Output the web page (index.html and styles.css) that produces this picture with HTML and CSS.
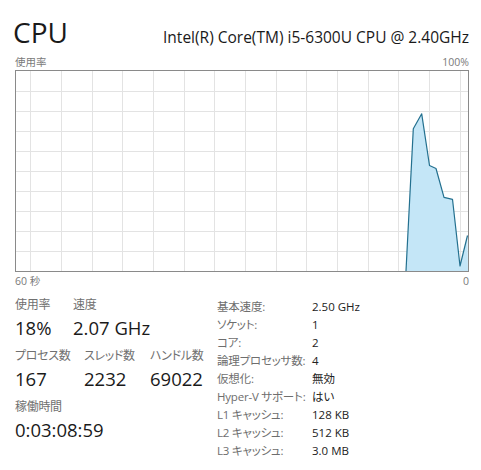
FILE: index.html
```html
<!DOCTYPE html>
<html lang="ja">
<head>
<meta charset="utf-8">
<title>CPU</title>
<link rel="stylesheet" href="styles.css">
</head>
<body>
<div class="page">
  <div class="header">
    <div class="title">CPU</div>
    <div class="model">Intel(R) Core(TM) i5-6300U CPU @ 2.40GHz</div>
  </div>
  <div class="axis axis-top">
    <span class="jp">使用率</span>
    <span>100%</span>
  </div>
  <svg class="graph" width="454" height="202" viewBox="0 0 454 202">
    <g class="grid" stroke="#e3e3e3" stroke-width="1" shape-rendering="crispEdges">
      <line x1="0" y1="21.5" x2="454" y2="21.5"/>
      <line x1="0" y1="41.5" x2="454" y2="41.5"/>
      <line x1="0" y1="61.5" x2="454" y2="61.5"/>
      <line x1="0" y1="81.5" x2="454" y2="81.5"/>
      <line x1="0" y1="101.5" x2="454" y2="101.5"/>
      <line x1="0" y1="121.5" x2="454" y2="121.5"/>
      <line x1="0" y1="141.5" x2="454" y2="141.5"/>
      <line x1="0" y1="161.5" x2="454" y2="161.5"/>
      <line x1="0" y1="181.5" x2="454" y2="181.5"/>
      <line x1="15.5" y1="0" x2="15.5" y2="202"/>
      <line x1="46.5" y1="0" x2="46.5" y2="202"/>
      <line x1="77.5" y1="0" x2="77.5" y2="202"/>
      <line x1="107.5" y1="0" x2="107.5" y2="202"/>
      <line x1="138.5" y1="0" x2="138.5" y2="202"/>
      <line x1="169.5" y1="0" x2="169.5" y2="202"/>
      <line x1="199.5" y1="0" x2="199.5" y2="202"/>
      <line x1="230.5" y1="0" x2="230.5" y2="202"/>
      <line x1="261.5" y1="0" x2="261.5" y2="202"/>
      <line x1="291.5" y1="0" x2="291.5" y2="202"/>
      <line x1="322.5" y1="0" x2="322.5" y2="202"/>
      <line x1="353.5" y1="0" x2="353.5" y2="202"/>
      <line x1="383.5" y1="0" x2="383.5" y2="202"/>
      <line x1="414.5" y1="0" x2="414.5" y2="202"/>
      <line x1="445.5" y1="0" x2="445.5" y2="202"/>
    </g>
    <polygon fill="#c4e6f7" points="391,201 398.3,58.8 406.7,43.8 414.5,95.5 421,98.5 429,127.3 437.5,129.3 445,196 452.5,165.5 453,201"/>
    <polyline fill="none" stroke="#23708f" stroke-width="1.2" stroke-linejoin="round" points="391,201 398.3,58.8 406.7,43.8 414.5,95.5 421,98.5 429,127.3 437.5,129.3 445,196 452.5,165.5"/>
    <rect x="0.5" y="0.5" width="453" height="201" fill="none" stroke="#8a8a8a" stroke-width="1"/>
  </svg>
  <div class="axis axis-bottom">
    <span class="jp">60 秒</span>
    <span>0</span>
  </div>
  <div class="details">
    <div class="stats">
      <div class="stat-row">
        <div class="stat w58">
          <div class="label jp">使用率</div>
          <div class="value">18%</div>
        </div>
        <div class="stat">
          <div class="label jp">速度</div>
          <div class="value">2.07 GHz</div>
        </div>
      </div>
      <div class="stat-row">
        <div class="stat w69">
          <div class="label jp">プロセス数</div>
          <div class="value">167</div>
        </div>
        <div class="stat w66">
          <div class="label jp">スレッド数</div>
          <div class="value">2232</div>
        </div>
        <div class="stat">
          <div class="label jp">ハンドル数</div>
          <div class="value">69022</div>
        </div>
      </div>
      <div class="stat-row">
        <div class="stat">
          <div class="label jp">稼働時間</div>
          <div class="value">0:03:08:59</div>
        </div>
      </div>
    </div>
    <div class="info">
      <div class="k jp">基本速度:</div><div class="v">2.50 GHz</div>
      <div class="k jp">ソケット:</div><div class="v">1</div>
      <div class="k jp">コア:</div><div class="v">2</div>
      <div class="k jp">論理プロセッサ数:</div><div class="v">4</div>
      <div class="k jp">仮想化:</div><div class="v jp">無効</div>
      <div class="k jp">Hyper-V サポート:</div><div class="v jp">はい</div>
      <div class="k jp">L1 キャッシュ:</div><div class="v">128 KB</div>
      <div class="k jp">L2 キャッシュ:</div><div class="v">512 KB</div>
      <div class="k jp">L3 キャッシュ:</div><div class="v">3.0 MB</div>
    </div>
  </div>
</div>
</body>
</html>
```

FILE: styles.css
```css
html, body {
  margin: 0;
  padding: 0;
  background: #ffffff;
}
body {
  font-family: "Open Sans", "Noto Sans CJK JP", sans-serif;
  color: #1a1a1a;
}
.jp {
  font-feature-settings: "palt";
}
.page {
  width: 454px;
  padding-left: 15px;
}
.header {
  display: flex;
  justify-content: space-between;
  align-items: baseline;
  padding-top: 12px;
  height: 42px;
}
.title {
  font-size: 28px;
  line-height: 40px;
  margin-left: -2px;
}
.model {
  font-size: 15.5px;
  line-height: 20px;
}
.axis {
  display: flex;
  justify-content: space-between;
  font-size: 10.5px;
  color: #7a7a7a;
  height: 16px;
  line-height: 16px;
}
.graph {
  display: block;
}
.axis-bottom {
  margin-top: 1px;
  margin-bottom: 8px;
}
.details {
  display: flex;
}
.stats {
  width: 202px;
  display: flex;
  flex-direction: column;
}
.stat-row {
  display: flex;
  margin-bottom: 5px;
}
.stat .label {
  font-size: 12px;
  line-height: 16px;
  color: #707070;
  letter-spacing: -0.3px;
}
.stat .value {
  font-size: 18.5px;
  line-height: 30px;
  color: #1a1a1a;
}
.w58 { width: 58px; }
.w69 { width: 69px; }
.w66 { width: 66px; }
.info {
  display: grid;
  grid-template-columns: 95px auto;
  font-size: 11.5px;
  line-height: 18px;
  padding-top: 1px;
}
.info .k {
  color: #6e6e6e;
  white-space: nowrap;
  letter-spacing: -0.2px;
}
.info .v {
  color: #222222;
}
```
